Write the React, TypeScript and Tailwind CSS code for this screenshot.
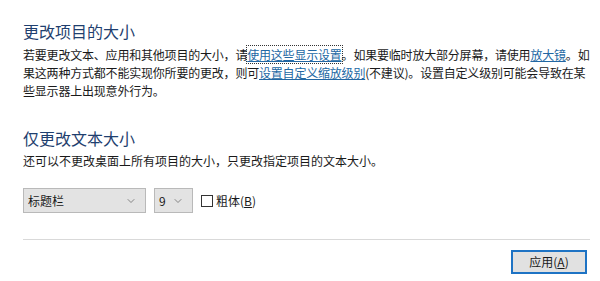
import { ChevronDown } from 'lucide-react'

const font = { fontFamily: '"Noto Sans CJK SC", "Microsoft YaHei", sans-serif' }

function Select({ value, width }: { value: string; width: string }) {
  return (
    <div
      className={`flex h-[25px] items-center justify-between border border-[#b9b9b9] bg-[#e3e3e3] pl-[4px] pr-[8px] text-[12px] text-[#1a1a1a] ${width}`}
    >
      <span>{value}</span>
      <ChevronDown className="h-[12px] w-[12px] text-[#666]" strokeWidth={1.5} />
    </div>
  )
}

export default function App() {
  return (
    <div className="h-[281px] w-[600px] overflow-hidden bg-white pl-[23px] pt-[20px]" style={font}>
      <div className="text-[16px] leading-[22px] text-[#1f3f6f]">更改项目的大小</div>
      <div className="mt-[4px] whitespace-nowrap text-[12px] leading-[18px] tracking-[-0.2px] text-[#1a1a1a]">
        <div>
          若要更改文本、应用和其他项目的大小，请
          <span className="text-[#2267a3] underline outline-1 outline-dotted outline-[#333]">使用这些显示设置</span>
          。如果要临时放大部分屏幕，请使用<span className="text-[#2267a3] underline">放大镜</span>。如
        </div>
        <div>
          果这两种方式都不能实现你所要的更改，则可<span className="text-[#2267a3] underline">设置自定义缩放级别</span>
          (不建议)。设置自定义级别可能会导致在某
        </div>
        <div>些显示器上出现意外行为。</div>
      </div>

      <div className="mt-[27px] text-[16px] leading-[22px] text-[#1f3f6f]">仅更改文本大小</div>
      <div className="mt-[3px] text-[12px] leading-[18px] text-[#1a1a1a]">
        还可以不更改桌面上所有项目的大小，只更改指定项目的文本大小。
      </div>

      <div className="mt-[18px] flex items-center gap-[8px]">
        <Select value="标题栏" width="w-[123px]" />
        <Select value="9" width="w-[39px]" />
        <div className="flex items-center gap-[3px] text-[12px] text-[#1a1a1a]">
          <div className="h-[12px] w-[12px] border border-[#333] bg-white" />
          <span>
            粗体(<span className="underline">B</span>)
          </span>
        </div>
      </div>

      <div className="mr-[10px] mt-[26px] h-px bg-[#d9d9d9]" />

      <div className="mr-[13px] mt-[10px] flex justify-end">
        <div className="flex h-[24px] w-[76px] items-center justify-center border-2 border-[#1e73c4] bg-[#e1e1e1] text-[12px] text-[#1a1a1a]">
          应用(<span className="underline">A</span>)
        </div>
      </div>
    </div>
  )
}
